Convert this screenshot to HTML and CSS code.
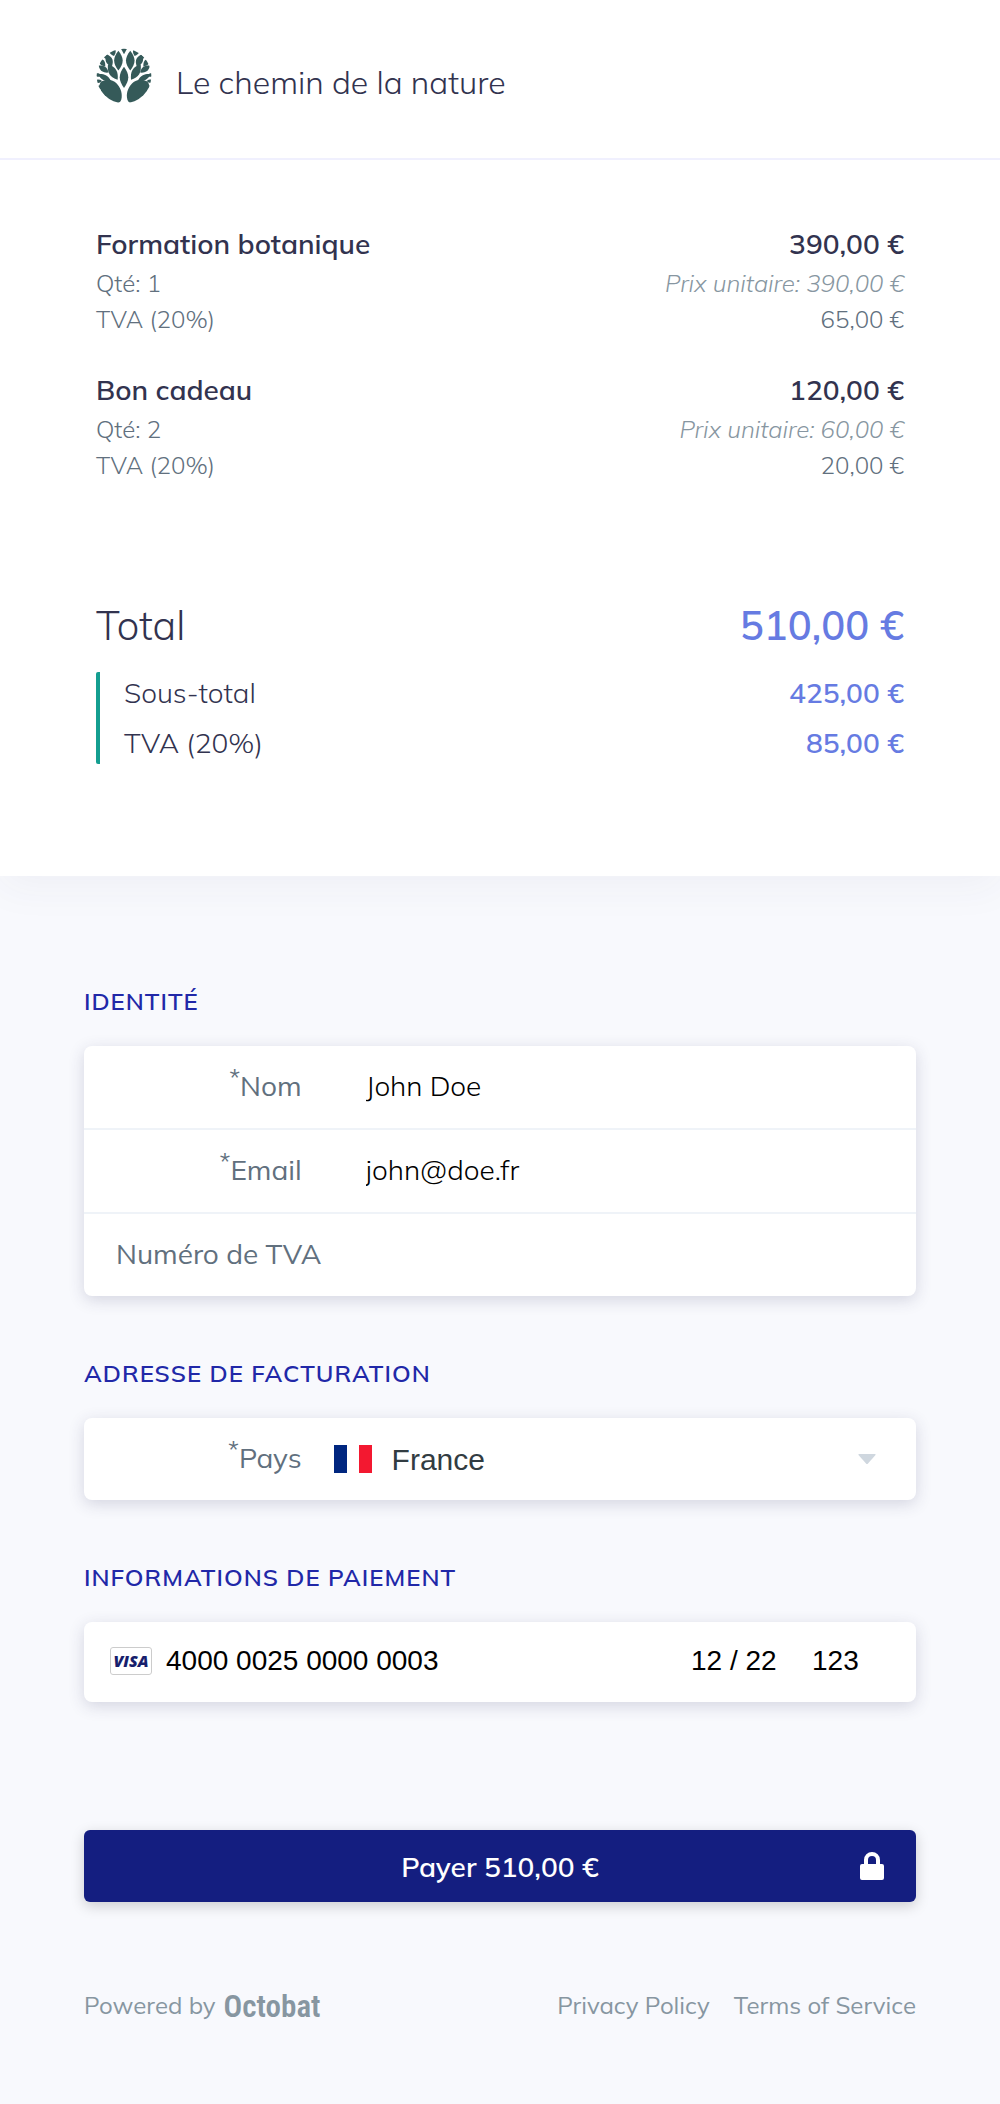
FILE: index.html
```html
<!DOCTYPE html>
<html lang="fr">
<head>
  <meta charset="UTF-8" />
  <meta name="viewport" content="width=device-width, initial-scale=1.0"/>
  <title>Le chemin de la nature - Paiement</title>
  <link rel="stylesheet" href="styles.css">
</head>
<body>
  <section class="summary">
    <header class="header">
      <svg class="logo" viewBox="18 16 170 164" aria-hidden="true">
        <defs>
          <clipPath id="crown"><circle cx="103" cy="98" r="83"/></clipPath>
          <path id="leaf" d="M0 -30 C8 -20 13 -10 13 0 C13 10 8 20 0 30 C-8 20 -13 10 -13 0 C-13 -10 -8 -20 0 -30Z"/>
          <g id="side">
            <use href="#leaf" transform="translate(86 51)"/>
            <use href="#leaf" transform="translate(69 86) rotate(-32) scale(.92)"/>
            <use href="#leaf" transform="translate(58 51) rotate(-22) scale(.8 .68)"/>
            <use href="#leaf" transform="translate(44 103) rotate(-62) scale(.62 .75)"/>
            <use href="#leaf" transform="translate(41 77) rotate(-55) scale(.65 .62)"/>
            <use href="#leaf" transform="translate(36 56) rotate(-38) scale(.6 .55)"/>
            <use href="#leaf" transform="translate(24 95) rotate(-75) scale(.4 .42)"/>
            <use href="#leaf" transform="translate(24 114) rotate(-95) scale(.4 .42)"/>
            <use href="#leaf" transform="translate(26 134) rotate(-130) scale(.45 .45)"/>
            <use href="#leaf" transform="translate(47 37) rotate(-30) scale(.5 .4)"/>
            <use href="#leaf" transform="translate(68 23) rotate(-18) scale(.75 .5)"/>
            <path d="M36 114 C50 106 69 108 80 120 C91 132 98 146 96 163 C95 173 91 179 82 180 C62 178 38 158 30 136 C27 126 29 119 36 114Z"/>
          </g>
        </defs>
        <g clip-path="url(#crown)">
          <use href="#side"/>
          <use href="#side" transform="translate(208 0) scale(-1 1)"/>
          <use href="#leaf" transform="translate(103 102) scale(1 1.08)"/>
          <path d="M91 10 H115 L103 32Z"/>
        </g>
      </svg>
      <h1 class="brand">Le chemin de la nature</h1>
    </header>

    <div class="order">
      <div class="item">
        <div class="line item-name"><span>Formation botanique</span><span>390,00 €</span></div>
        <div class="line"><span>Qté: 1</span><em>Prix unitaire: 390,00 €</em></div>
        <div class="line"><span>TVA (20%)</span><span>65,00 €</span></div>
      </div>
      <div class="item">
        <div class="line item-name"><span>Bon cadeau</span><span>120,00 €</span></div>
        <div class="line"><span>Qté: 2</span><em>Prix unitaire: 60,00 €</em></div>
        <div class="line"><span>TVA (20%)</span><span>20,00 €</span></div>
      </div>

      <div class="totals">
        <div class="line total"><span>Total</span><strong>510,00 €</strong></div>
        <div class="breakdown">
          <div class="line"><span>Sous-total</span><strong>425,00 €</strong></div>
          <div class="line"><span>TVA (20%)</span><strong>85,00 €</strong></div>
        </div>
      </div>
    </div>
  </section>

  <main class="checkout">
    <form id="payment-form">
      <h2>IDENTITÉ</h2>
      <div class="card">
        <div class="field">
          <label for="name"><sup>*</sup>Nom</label>
          <input type="text" id="name" value="John Doe" required>
        </div>
        <div class="field">
          <label for="email"><sup>*</sup>Email</label>
          <input type="email" id="email" value="john@doe.fr" required>
        </div>
        <div class="field">
          <input type="text" id="vat" placeholder="Numéro de TVA" aria-label="Numéro de TVA">
        </div>
      </div>

      <h2>ADRESSE DE FACTURATION</h2>
      <div class="card">
        <div class="field country">
          <label for="country"><sup>*</sup>Pays</label>
          <svg class="flag" viewBox="0 0 38 28" aria-hidden="true">
            <path fill="#00267f" d="M0 0h13v28H0z"/>
            <path fill="#fff" d="M13 0h12v28H13z"/>
            <path fill="#f31830" d="M25 0h13v28H25z"/>
          </svg>
          <select id="country" required>
            <option value="FR">France</option>
          </select>
          <svg class="arrow" viewBox="0 0 18 10" aria-hidden="true">
            <path fill="#cfd7df" d="M1 0h16q1 0 .5 1L10 9.500q-1 1-2 0L.5 1Q0 0 1 0z"/>
          </svg>
        </div>
      </div>

      <h2>INFORMATIONS DE PAIEMENT</h2>
      <div class="card payment">
        <svg class="visa" viewBox="0 0 42 28" aria-hidden="true">
          <rect x=".5" y=".5" width="41" height="27" rx="2.500" fill="#fff" stroke="#ccc"/>
          <text x="21" y="20" text-anchor="middle">VISA</text>
        </svg>
        <input class="number" type="text" value="4000 0025 0000 0003" aria-label="Numéro de carte">
        <input class="expiry" type="text" value="12 / 22" aria-label="Date d'expiration">
        <input class="cvc" type="text" value="123" aria-label="CVC">
      </div>

      <button type="submit" class="pay">
        Payer 510,00 €
        <svg class="lock" viewBox="0 0 24 28" aria-hidden="true">
          <path fill="#fff" fill-rule="evenodd" d="M4 12V8a8 8 0 0 1 16 0v4h2q2 0 2 2v12q0 2-2 2H2q-2 0-2-2V14q0-2 2-2zM8 12h8V8a4 4 0 0 0-8 0z"/>
        </svg>
      </button>
    </form>

    <footer class="footer">
      <div class="powered">
        <span>Powered by</span>
        <a href="#" class="octobat">Octobat</a>
      </div>
      <nav>
        <a href="#">Privacy Policy</a>
        <a href="#">Terms of Service</a>
      </nav>
    </footer>
  </main>
</body>
</html>
```
FILE: styles.css
```css
* {
  box-sizing: border-box;
}

body {
  margin: 0;
  background: #f8f9fd;
  color: #32334f;
  font-family: Mulish, Muli, Lato, sans-serif;
  font-size: 24px;
  font-weight: 300;
  line-height: 36px;
}

h1, h2 {
  margin: 0;
}

.summary {
  background: #fff;
  box-shadow: 0 10px 40px rgba(50, 50, 93, 0.05);
}

.header {
  display: flex;
  align-items: center;
  gap: 24px;
  padding: 48px 96px 54px;
  border-bottom: 2px solid #f0f0fe;
}

.logo {
  width: 56px;
  height: 56px;
  fill: #355a59;
}

.brand {
  padding-top: 12px;
  font-size: 32px;
  font-weight: 300;
  line-height: 44px;
}

.order {
  padding: 63px 96px 112px;
}

.item {
  margin-bottom: 32px;
  color: #61707e;
}

.line {
  display: flex;
  justify-content: space-between;
}

.item-name {
  color: #32334f;
  font-size: 28px;
  font-weight: 600;
  line-height: 42px;
}

.line em {
  color: #8796a1;
}

.totals {
  padding-top: 80px;
}

.line strong {
  color: #667be2;
  font-weight: 600;
}

.total {
  margin-bottom: 17px;
  font-size: 40px;
  line-height: 60px;
}

.breakdown {
  display: grid;
  gap: 8px;
  padding-left: 24px;
  border-left: 4px solid #149e90;
  border-radius: 2px;
  font-size: 28px;
  line-height: 42px;
}

.checkout {
  padding: 107px 84px 80px;
}

h2 {
  margin-bottom: 27px;
  color: #2128a8;
  font-size: 24px;
  font-weight: 600;
  letter-spacing: 1px;
  line-height: 36px;
}

.card {
  margin-bottom: 59px;
  background: #fff;
  border-radius: 8px;
  box-shadow: 0 4px 16px rgba(50, 50, 93, 0.18);
}

.field {
  display: flex;
  align-items: center;
  height: 82px;
}

.field + .field {
  height: 84px;
  border-top: 2px solid #eff3f8;
}

label {
  flex: 0 0 30%;
  padding: 0 32px 2px 0;
  color: #61707e;
  font-size: 28px;
  font-weight: 400;
  text-align: right;
}

sup {
  font-size: 24px;
  line-height: 0;
}

input, select {
  flex: 1;
  min-width: 0;
  height: 80px;
  padding: 0 32px 4px;
  border: 0;
  border-radius: 8px;
  background: transparent;
  color: #000;
  font-family: inherit;
  font-size: 28px;
  font-weight: inherit;
}

input::placeholder {
  color: #61707e;
  font-weight: 400;
}

.country {
  position: relative;
}

.flag {
  width: 38px;
  height: 28px;
}

select {
  appearance: none;
  padding: 0 0 0 20px;
  color: #323c42;
  font-family: "Liberation Sans", sans-serif;
  font-size: 30px;
}

.arrow {
  position: absolute;
  right: 40px;
  width: 18px;
  height: 10px;
  pointer-events: none;
}

.payment {
  display: flex;
  align-items: center;
  height: 80px;
  padding: 0 28px 2px 26px;
}

.payment input {
  flex: 0 0 auto;
  height: 76px;
  padding: 0;
  font-family: "Liberation Sans", sans-serif;
}

.visa {
  width: 42px;
  height: 28px;
  margin-right: 14px;
}

.visa text {
  fill: #171e6c;
  font-family: "Open Sans", sans-serif;
  font-size: 16px;
  font-style: italic;
  font-weight: 800;
}

.payment .number {
  flex: 1;
}

.payment .expiry {
  width: 121px;
}

.payment .cvc {
  width: 76px;
}

.pay {
  display: block;
  position: relative;
  width: 100%;
  height: 72px;
  margin-top: 128px;
  border: 0;
  border-radius: 6px;
  background: #141e80;
  box-shadow: 0 4px 14px rgba(0, 0, 0, 0.18);
  color: #fff;
  font-family: inherit;
  font-size: 28px;
  font-weight: 600;
  cursor: pointer;
}

.lock {
  position: absolute;
  top: 22px;
  right: 32px;
  width: 24px;
  height: 28px;
}

.footer {
  display: flex;
  justify-content: space-between;
  padding-top: 85px;
  color: #8796a1;
  font-weight: 400;
}

.footer nav {
  display: flex;
  gap: 24px;
}

.footer a {
  color: inherit;
  text-decoration: none;
}

.powered {
  display: flex;
  gap: 8px;
}

.footer .octobat {
  padding-top: 4px;
  font-family: "Roboto Condensed", Roboto, sans-serif;
  font-size: 31px;
  font-weight: 600;
  line-height: 32px;
}
```
